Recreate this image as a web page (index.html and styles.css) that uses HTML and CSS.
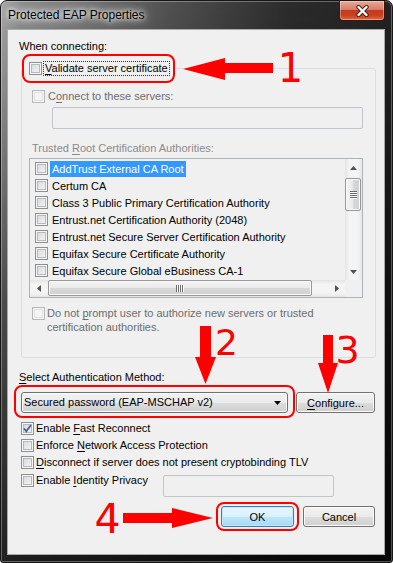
FILE: index.html
```html
<!DOCTYPE html>
<html lang="en">
<head>
    <meta charset="UTF-8">
    <meta name="viewport" content="width=device-width, initial-scale=1.0">
    <title>Protected EAP Properties</title>
    <link rel="stylesheet" href="styles.css">
</head>
<body>
    <div class="window">
        <div class="titlebar">
            <span class="title">Protected EAP Properties</span>
            <button class="close" aria-label="Close">
                <svg width="13" height="12" viewBox="0 0 13 12">
                    <path d="M2.5 2 L10.5 10 M10.5 2 L2.5 10" stroke="#4a231b" stroke-width="4.4" stroke-linecap="round"/>
                    <path d="M2.5 2 L10.5 10 M10.5 2 L2.5 10" stroke="#fff" stroke-width="2.4" stroke-linecap="round"/>
                </svg>
            </button>
        </div>

        <div class="client">
            <div class="label">When connecting:</div>

            <fieldset class="group">
                <legend class="mark validate">
                    <span class="legend-row">
                        <span class="check"></span>
                        <span class="focus"><u>V</u>alidate server certificate</span>
                    </span>
                </legend>

                <div class="row disabled servers-row">
                    <span class="check off"></span>
                    <span class="text">C<u>o</u>nnect to these servers:</span>
                </div>
                <div class="textbox servers"></div>

                <div class="label gray trusted">Trusted <u>R</u>oot Certification Authorities:</div>

                <div class="list">
                    <div class="items">
                        <div class="item"><span class="check"></span><span class="name selected">AddTrust External CA Root</span></div>
                        <div class="item"><span class="check"></span><span class="name">Certum CA</span></div>
                        <div class="item"><span class="check"></span><span class="name">Class 3 Public Primary Certification Authority</span></div>
                        <div class="item"><span class="check"></span><span class="name">Entrust.net Certification Authority (2048)</span></div>
                        <div class="item"><span class="check"></span><span class="name">Entrust.net Secure Server Certification Authority</span></div>
                        <div class="item"><span class="check"></span><span class="name">Equifax Secure Certificate Authority</span></div>
                        <div class="item"><span class="check"></span><span class="name">Equifax Secure Global eBusiness CA-1</span></div>
                    </div>
                    <div class="vscroll">
                        <span class="sb-btn"><svg width="7" height="4" viewBox="0 0 7 4"><polygon points="3.5,0 7,4 0,4" fill="#505050"/></svg></span>
                        <span class="vthumb"><span class="vgrip"></span></span>
                        <span class="sb-btn down"><svg width="7" height="4" viewBox="0 0 7 4"><polygon points="0,0 7,0 3.5,4" fill="#505050"/></svg></span>
                    </div>
                    <div class="hscroll">
                        <span class="sb-btn"><svg width="4" height="7" viewBox="0 0 4 7"><polygon points="4,0 4,7 0,3.5" fill="#505050"/></svg></span>
                        <span class="hthumb"><span class="hgrip"></span></span>
                        <span class="sb-btn right"><svg width="4" height="7" viewBox="0 0 4 7"><polygon points="0,0 4,3.5 0,7" fill="#505050"/></svg></span>
                    </div>
                    <div class="corner"></div>
                </div>

                <div class="row disabled prompt">
                    <span class="check off"></span>
                    <span class="text">Do not <u>p</u>rompt user to authorize new servers or trusted<br>certification authorities.</span>
                </div>
            </fieldset>

            <div class="label method-label"><u>S</u>elect Authentication Method:</div>
            <div class="method-row">
                <div class="mark combo-mark">
                    <div class="combo">
                        <span>Secured password (EAP-MSCHAP v2)</span>
                        <svg width="7" height="4" viewBox="0 0 7 4"><polygon points="0,0 7,0 3.5,4" fill="#000"/></svg>
                    </div>
                </div>
                <button class="btn configure"><u>C</u>onfigure...</button>
            </div>

            <div class="options">
                <div class="row opt">
                    <span class="check checked">
                        <svg width="11" height="11" viewBox="0 0 11 11"><path d="M2 5.5 L4.3 8.2 L9 2" fill="none" stroke="#4c619b" stroke-width="1.8"/></svg>
                    </span>
                    <span class="text">Enable <u>F</u>ast Reconnect</span>
                </div>
                <div class="row opt">
                    <span class="check"></span>
                    <span class="text">Enforce <u>N</u>etwork Access Protection</span>
                </div>
                <div class="row opt">
                    <span class="check"></span>
                    <span class="text"><u>D</u>isconnect if server does not present cryptobinding TLV</span>
                </div>
                <div class="row opt identity">
                    <span class="check"></span>
                    <span class="text id-label">Enable <u>I</u>dentity Privacy</span>
                    <div class="textbox privacy"></div>
                </div>
            </div>

            <div class="buttons">
                <div class="mark ok-mark"><button class="btn default">OK</button></div>
                <button class="btn cancel">Cancel</button>
            </div>
        </div>

        <!-- red annotations drawn over the dialog -->
        <svg class="annotations" width="393" height="563" viewBox="0 0 393 563" aria-hidden="true">
            <g fill="#ff0000">
                <polygon points="183,69 225,58 225,63 273,63 273,73 225,73 225,80"/>
                <polygon points="200,326 211,326 211,357 216,357 205.5,384 195,357 200,357"/>
                <polygon points="323,335 333,335 333,363 338,363 328,393 318,363 323,363"/>
                <polygon points="123,513 172,513 172,508 213,518 172,528 172,523 123,523"/>
            </g>
            <g fill="#ff0000" font-family="DejaVu Sans, sans-serif" text-anchor="middle">
                <text x="290.5" y="82" font-size="40">1</text>
                <text x="226.5" y="355" font-size="36">2</text>
                <text x="347.5" y="363" font-size="38">3</text>
                <text x="107.5" y="533" font-size="41">4</text>
            </g>
        </svg>
    </div>
</body>
</html>
```

FILE: styles.css
```css
* {
    box-sizing: border-box;
}

body {
    margin: 0;
    background: #fff;
    font-family: "Liberation Sans", Arial, sans-serif;
    font-size: 11px;
    line-height: 15px;
    color: #000;
}

u {
    text-decoration-thickness: 1px;
    text-underline-offset: 2px;
}

.window {
    position: relative;
    display: flex;
    flex-direction: column;
    width: 393px;
    height: 563px;
    padding: 0 7px 7px 6px;
    border: 1px solid #161616;
    border-radius: 7px 7px 3px 3px;
    background:
        linear-gradient(to bottom, rgba(0, 0, 0, 0) 0, rgba(0, 0, 0, 0.55) 55%, rgba(0, 0, 0, 0.8) 100%),
        linear-gradient(to right, #a6a6a6 0, #8e8e8e 20px, #505050 170px, #2b2b2b 290px, #222 100%);
    box-shadow: inset 0 0 0 1px rgba(255, 255, 255, 0.3);
}

/* title bar */
.titlebar {
    display: flex;
    align-items: flex-start;
    height: 28px;
    margin: 0 -7px 0 -6px;
    padding-left: 7px;
}

.title {
    align-self: center;
    font-size: 12px;
    color: #000;
    text-shadow: 0 0 4px #fff, 0 0 8px #fff, 0 0 12px rgba(255, 255, 255, 0.8);
}

.close {
    display: flex;
    align-items: center;
    justify-content: center;
    width: 46px;
    height: 20px;
    margin: 0 7px 0 auto;
    padding: 0;
    border: 1px solid #3b1510;
    border-top: none;
    border-radius: 0 0 4px 4px;
    background: linear-gradient(to bottom, #e9a999 0%, #d77d68 45%, #c23b1f 50%, #c9401f 75%, #dc6a3e 100%);
    box-shadow: inset 0 0 0 1px rgba(255, 255, 255, 0.35);
}

/* client area */
.client {
    position: relative;
    flex: 1;
    padding-top: 9px;
    background: #f0f0f0;
    border: 1px solid #a9a9a9;
}

.label {
    margin-left: 11px;
}

.gray {
    color: #8a8a8a;
}

.check {
    flex: none;
    display: flex;
    align-items: center;
    justify-content: center;
    width: 13px;
    height: 13px;
    border: 1px solid #8e8f8f;
    background: linear-gradient(135deg, #d3d6da 0%, #f8f8f8 100%);
    box-shadow: inset 0 0 0 1px #f6f6f6, inset 0 0 0 2px #b6babf;
}

.check.off {
    border-color: #b9b9b9;
    background: #f4f4f4;
    box-shadow: inset 0 0 0 1px #f4f4f4, inset 0 0 0 2px #e2e2e2;
}

.row {
    display: flex;
    align-items: center;
    white-space: nowrap;
}

.disabled {
    color: #6d6d6d;
}

/* group box */
.group {
    width: 355px;
    margin: 0 0 0 13px;
    padding: 0 0 23px;
    border: 1px solid #d5dfe5;
    border-radius: 3px;
}

.mark {
    border: 2px solid #ff0000;
    border-radius: 8px;
}

.validate {
    width: 153px;
    height: 29px;
    margin: 0 0 3px;
    padding: 0 0 0 5px;
    white-space: nowrap;
}

.legend-row {
    display: flex;
    align-items: center;
    height: 25px;
}

.focus {
    margin-left: 1px;
    padding: 0 1px;
    line-height: 13px;
    border: 1px dotted #333;
}

.servers-row {
    height: 15px;
    margin: 3px 0 0 10px;
}

.servers-row .text {
    margin-left: 3px;
}

.textbox {
    height: 22px;
    border: 1px solid #c2c6c9;
    border-radius: 2px;
    background: #f0f0f0;
}

.servers {
    width: 311px;
    margin: 3px 0 0 30px;
}

.trusted {
    margin: 12px 0 0 10px;
}

/* certificate list */
.list {
    display: grid;
    grid-template-columns: 315px 17px;
    grid-template-rows: 121px 17px;
    width: 334px;
    height: 140px;
    margin: 2px 0 0 7px;
    border: 1px solid #adb2b5;
    background: #f0f0f0;
}

.items {
    padding-top: 1px;
    overflow: hidden;
}

.item {
    display: flex;
    align-items: center;
    height: 17px;
    padding-left: 5px;
    white-space: nowrap;
}

.name {
    margin-left: 2px;
    padding: 0 2px;
    line-height: 16px;
}

.selected {
    background: #3399ff;
    color: #fff;
}

.vscroll {
    display: flex;
    flex-direction: column;
    background: linear-gradient(to right, #e4e4e4, #f4f4f4 25%, #f4f4f4 75%, #e6e6e6);
}

.hscroll {
    display: flex;
    background: linear-gradient(to bottom, #e4e4e4, #f4f4f4 25%, #f4f4f4 75%, #e6e6e6);
}

.sb-btn {
    display: flex;
    align-items: center;
    justify-content: center;
    flex: none;
    width: 17px;
    height: 17px;
}

.sb-btn.down {
    margin-top: auto;
}

.sb-btn.right {
    margin-left: auto;
}

.vthumb {
    display: flex;
    align-items: center;
    justify-content: center;
    width: 16px;
    height: 33px;
    margin-top: 2px;
    border: 1px solid #979797;
    border-radius: 2px;
    background: linear-gradient(to right, #f4f4f4, #e9e9e9 50%, #d8d8d8 51%, #d0d0d0);
    box-shadow: inset 0 0 0 1px #fafafa;
}

.vgrip {
    width: 7px;
    height: 8px;
    background: repeating-linear-gradient(to bottom, #6a6a6a 0 1px, #ffffff 1px 2px);
}

.hthumb {
    display: flex;
    align-items: center;
    justify-content: center;
    width: 264px;
    height: 16px;
    margin-left: 1px;
    border: 1px solid #979797;
    border-radius: 2px;
    background: linear-gradient(to bottom, #f4f4f4, #e9e9e9 50%, #d8d8d8 51%, #d0d0d0);
    box-shadow: inset 0 0 0 1px #fafafa;
}

.hgrip {
    width: 8px;
    height: 7px;
    background: repeating-linear-gradient(to right, #6a6a6a 0 1px, #ffffff 1px 2px);
}

.corner {
    background: #f0f0f0;
}

.prompt {
    align-items: flex-start;
    margin: 8px 0 0 10px;
    line-height: 14px;
}

.prompt .check {
    margin-top: 1px;
}

.prompt .text {
    margin-left: 2px;
}

/* authentication method */
.method-label {
    margin-top: 12px;
}

.method-row {
    display: flex;
    align-items: flex-start;
}

.combo-mark {
    width: 281px;
    margin-left: 6px;
    padding: 5px 5px 3px;
}

.combo {
    display: flex;
    align-items: center;
    justify-content: space-between;
    height: 21px;
    padding: 0 6px 0 2px;
    border: 1px solid #707070;
    border-radius: 3px;
    background: linear-gradient(to bottom, #f2f2f2 0%, #ebebeb 50%, #dddddd 51%, #cfcfcf 100%);
    box-shadow: inset 0 0 0 1px #fcfcfc;
}

.btn {
    height: 21px;
    padding: 0;
    font-family: inherit;
    font-size: 11px;
    color: #000;
    border: 1px solid #707070;
    border-radius: 3px;
    background: linear-gradient(to bottom, #f2f2f2 0%, #ebebeb 50%, #dddddd 51%, #cfcfcf 100%);
    box-shadow: inset 0 0 0 1px #fcfcfc;
}

.configure {
    width: 79px;
    margin: 7px 0 0 1px;
}

/* options */
.options {
    margin-top: 2px;
}

.opt {
    height: 17px;
    margin-left: 13px;
}

.opt .text {
    margin-left: 2px;
}

.identity {
    align-items: flex-start;
    height: auto;
    margin-top: 2px;
}

.identity .check {
    margin-top: 1px;
}

.id-label {
    flex: none;
    width: 127px;
}

.privacy {
    width: 171px;
    margin-top: 2px;
}

/* dialog buttons */
.buttons {
    display: flex;
    justify-content: flex-end;
    align-items: flex-start;
    margin-top: 5px;
    padding-right: 9px;
}

.ok-mark {
    padding: 2px 3px;
}

.default {
    width: 73px;
    border-color: #3c7fb1;
    background: linear-gradient(to bottom, #eaf6fd 0%, #d9f0fc 50%, #bee6fd 51%, #a7d9f5 100%);
    box-shadow: inset 0 0 0 1px #c6e7f8;
}

.cancel {
    width: 72px;
    margin: 4px 0 0 4px;
}

.annotations {
    position: absolute;
    top: -1px;
    left: -1px;
    pointer-events: none;
}
```
